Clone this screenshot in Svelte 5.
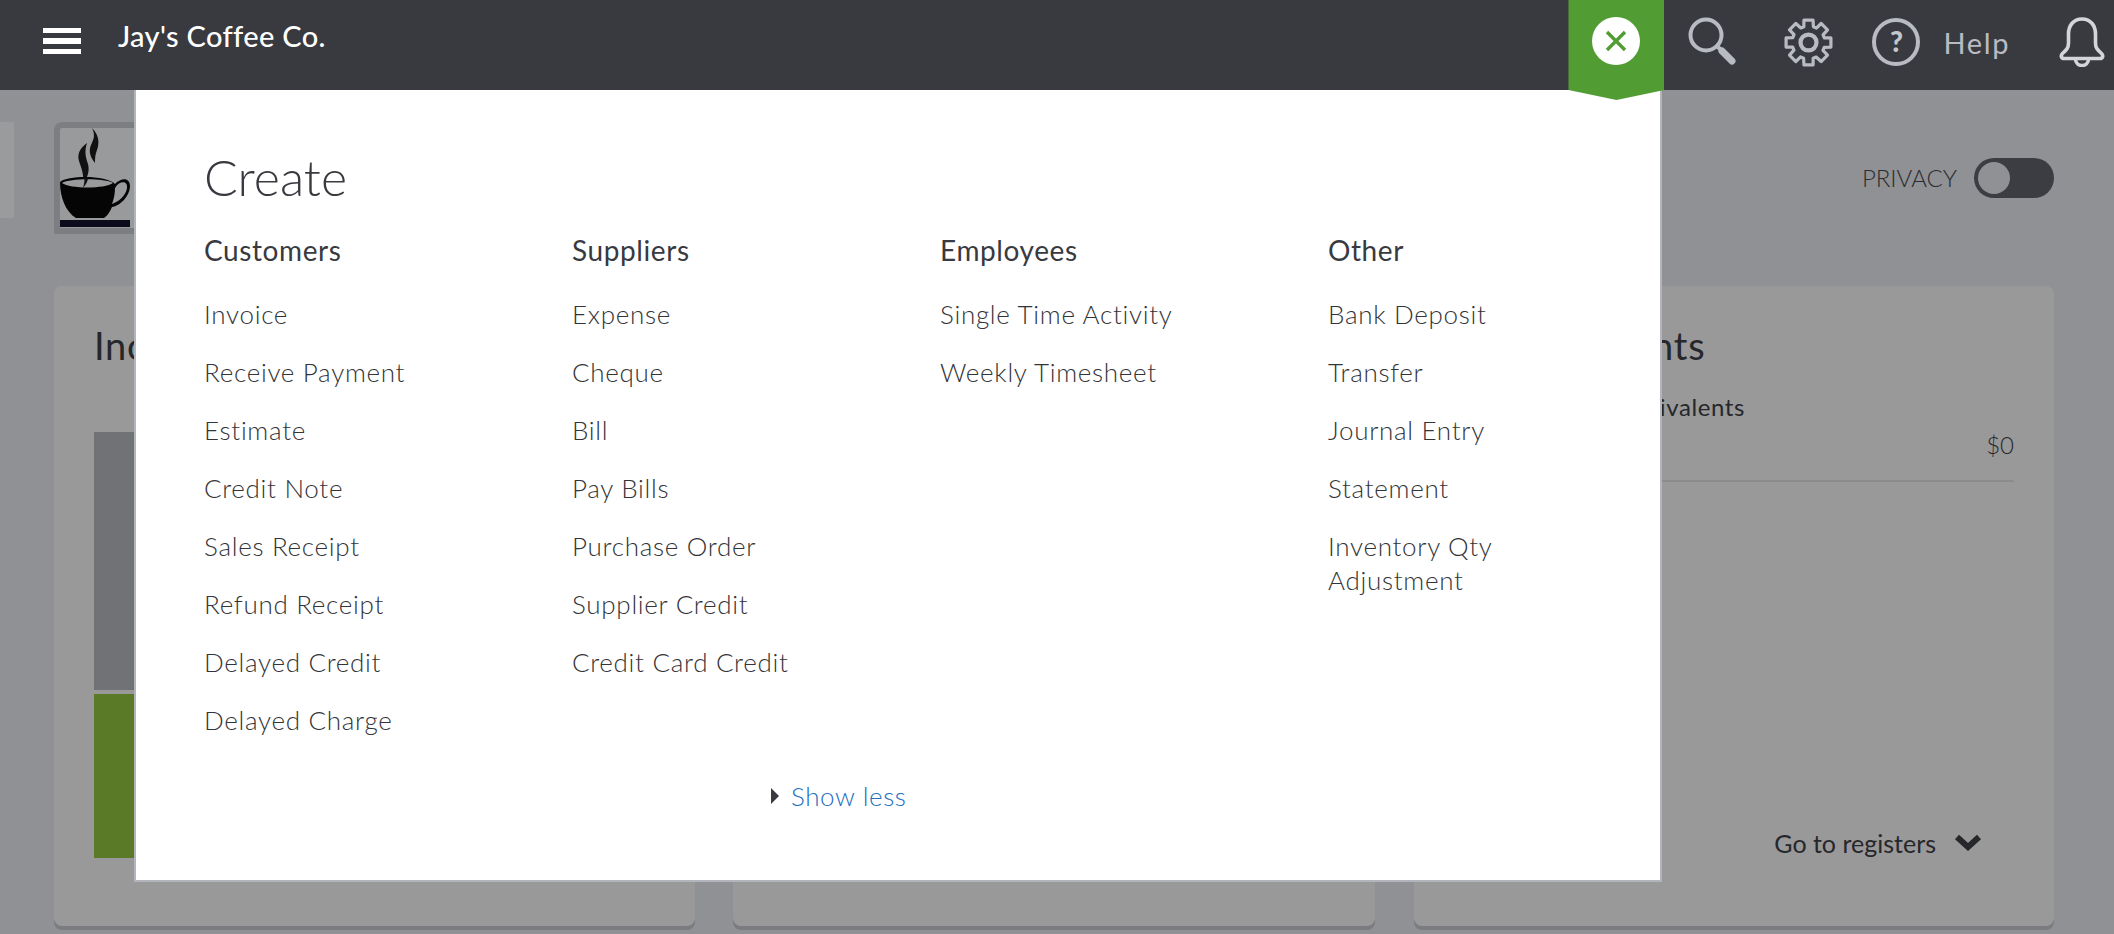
<script>
	const columns = [
		{ title: "Customers", width: 368, items: ["Invoice", "Receive Payment", "Estimate", "Credit Note", "Sales Receipt", "Refund Receipt", "Delayed Credit", "Delayed Charge"] },
		{ title: "Suppliers", width: 368, items: ["Expense", "Cheque", "Bill", "Pay Bills", "Purchase Order", "Supplier Credit", "Credit Card Credit"] },
		{ title: "Employees", width: 388, items: ["Single Time Activity", "Weekly Timesheet"] },
		{ title: "Other", width: 200, items: ["Bank Deposit", "Transfer", "Journal Entry", "Statement", "Inventory Qty Adjustment"] }
	];

	// 8 toothed gear outline, centred on 24,24
	function gearPath() {
		let d = "";
		for (let i = 0; i < 8; i++) {
			const a = (i * Math.PI) / 4 - Math.PI / 2;
			const pts = [[21.5, -0.2], [21.5, 0.2], [15.5, 0.3], [15.5, 0.5]].map(([r, o]) => [
				(24 + r * Math.cos(a + o)).toFixed(1),
				(24 + r * Math.sin(a + o)).toFixed(1)
			]);
			for (const p of pts) d += (d ? "L" : "M") + p[0] + " " + p[1];
		}
		return d + "Z";
	}
</script>

<div class="page">
	<header>
		<div class="burger"><span></span><span></span><span></span></div>
		<div class="company">Jay's Coffee Co.</div>

		<div class="tab">
			<button class="close" type="button" aria-label="Close">
				<svg width="24" height="24" viewBox="0 0 24 24"><path d="M3 3l18 18M21 3L3 21" stroke="#529c34" stroke-width="3.4" fill="none" /></svg>
			</button>
		</div>

		<div class="tools">
			<svg class="search" width="50" height="50" viewBox="0 0 50 50" fill="none" stroke="#b9bbc3">
				<circle cx="18" cy="18" r="15.500" stroke-width="4" />
				<path d="M30 30l4 4" stroke-width="4" />
				<path d="M34 34l10 10" stroke-width="7" stroke-linecap="round" />
			</svg>
			<svg class="gear" width="51" height="51" viewBox="0 0 48 48" fill="none" stroke="#b9bbc3" stroke-width="3" stroke-linejoin="round">
				<path d={gearPath()} />
				<circle cx="24" cy="24" r="7.500" stroke-width="4" />
			</svg>
			<div class="help-icon">?</div>
			<span class="help">Help</span>
			<svg class="bell" width="46" height="50" viewBox="0 0 46 50" fill="none" stroke="#d4d5da" stroke-width="3.6" stroke-linejoin="round">
				<path d="M23 2C14 2 9.500 9 9.500 17v9c0 5-2 7-6 10.500C1.500 38.500 2 41.500 5 41.500h36c3 0 3.500-3 1.500-5C38.500 33 36.500 31 36.500 26v-9C36.500 9 32 2 23 2Z" />
				<path d="M16.500 42c0 4 3 6.500 6.500 6.500s6.500-2.500 6.500-6.500" />
			</svg>
		</div>
	</header>

	<main>
		<div class="top-row">
			<div class="side-stub"></div>
			<div class="logo">
				<svg width="74" height="100" viewBox="0 0 74 100">
					<path d="M32 0C40 8 39 16 37 22C35 27 35 30 35 35C31 30 28 24 31 17C33 12 36 8 32 0Z" fill="#111" />
					<path d="M27 15C20 20 17 26 19 33C21 40 24 44 23 56C27 50 30 44 28 36C26 30 24 24 27 15Z" fill="#111" />
					<path d="M0 54C0 70 6 84 16 90H44C47 88 50 84 52 79C60 78 70 68 70 58C70 50 62 49 55 56C47 47 8 47 0 54Z" fill="#050505" />
					<path d="M55 60C60 52 68 53 67 60C66 68 58 74 52 76C54 71 55 65 55 60Z" fill="#999a9c" />
					<path d="M2 55C10 50 45 50 53 55C45 61 10 61 2 55Z" fill="#999a9c" />
					<path d="M24 50C25 53 24 56 23 60C26 56 28 53 28 50Z" fill="#111" />
					<rect x="0" y="92" width="70" height="7" fill="#0b0b1c" />
				</svg>
			</div>
			<div class="spacer"></div>
			<span class="privacy">PRIVACY</span>
			<div class="toggle"><span class="knob"></span></div>
		</div>

		<div class="cards">
			<section class="card income">
				<h2>Income</h2>
				<div class="bar grey"></div>
				<div class="bar green"></div>
			</section>
			<section class="card middle"></section>
			<section class="card bank">
				<h2>Bank accounts</h2>
				<div class="account">Cash and cash equivalents</div>
				<div class="amount">$0</div>
				<div class="registers">Go to registers
					<svg width="28" height="18" viewBox="0 0 28 18"><path d="M3 3l11 10L25 3" fill="none" stroke="#26272b" stroke-width="6" /></svg>
				</div>
			</section>
		</div>
	</main>

	<div class="modal">
		<h1>Create</h1>
		<div class="columns">
			{#each columns as col}
				<div class="column" style:width={col.width + "px"}>
					<h3>{col.title}</h3>
					<ul>
						{#each col.items as item}
							<li>{item}</li>
						{/each}
					</ul>
				</div>
			{/each}
		</div>
		<div class="more">
			<span class="caret"></span>
			<span class="link">Show less</span>
		</div>
	</div>
</div>

<style>
	:global(body) {
		background: #909194;
		font-family: Lato, "Open Sans", sans-serif;
	}

	.page {
		position: relative;
		height: 934px;
		overflow: hidden;
		background: #909194;
	}

	header {
		position: relative;
		z-index: 3;
		height: 90px;
		background: #393a3f;
		display: flex;
		align-items: center;
	}
	.burger {
		display: flex;
		flex-direction: column;
		gap: 5px;
		width: 38px;
		margin: -8px 0 0 43px;
	}
	.burger span {
		height: 5.5px;
		background: #fff;
	}
	.company {
		margin: -19px 0 0 37px;
		flex: 1;
		color: #fff;
		font-size: 29px;
		font-weight: 500;
		letter-spacing: 0.35px;
	}

	.tab {
		align-self: flex-start;
		width: 96px;
		height: 100px;
		background: #529c34;
		clip-path: polygon(0 0, 100% 0, 100% 90px, 50% 100px, 0 90px);
		display: flex;
		justify-content: center;
		padding-top: 17px;
		box-sizing: border-box;
	}
	.close {
		width: 48px;
		height: 48px;
		padding: 0;
		border: none;
		border-radius: 50%;
		background: #fff;
		display: flex;
		align-items: center;
		justify-content: center;
	}

	.tools {
		display: flex;
		align-items: center;
		margin: -6px 9px 0 24px;
	}
	.gear {
		margin-left: 45px;
	}
	.help-icon {
		box-sizing: border-box;
		width: 48px;
		height: 48px;
		margin-left: 38px;
		border: 4px solid #b9bbc3;
		border-radius: 50%;
		color: #c4c6cd;
		font-size: 28px;
		font-weight: 900;
		line-height: 39px;
		text-align: center;
	}
	.help {
		margin-left: 23px;
		color: #b9bbc3;
		font-size: 29px;
		letter-spacing: 1.6px;
	}
	.bell {
		margin-left: 49px;
	}

	.top-row {
		display: flex;
		align-items: flex-start;
		padding: 32px 60px 0 0;
		height: 196px;
		box-sizing: border-box;
	}
	.side-stub {
		width: 14px;
		height: 96px;
		background: #9a9b9d;
	}
	.logo {
		margin-left: 40px;
		padding: 6px 0 6px 6px;
		width: 80px;
		height: 100px;
		background: #999a9c;
		box-shadow: inset 0 0 0 6px #7d7e82;
		border-radius: 8px 0 0 0;
	}
	.spacer {
		flex: 1;
	}
	.privacy {
		margin-top: 41px;
		color: #2c2d31;
		font-size: 24px;
		font-weight: 300;
	}
	.toggle {
		box-sizing: border-box;
		width: 80px;
		height: 40px;
		margin: 36px 0 0 17px;
		padding: 4px;
		border-radius: 20px;
		background: #3c3d42;
	}
	.knob {
		display: block;
		width: 32px;
		height: 32px;
		border-radius: 50%;
		background: #909194;
	}

	.cards {
		display: grid;
		grid-template-columns: 641px 642px 641px;
		column-gap: 38px;
		margin-left: 54px;
		align-items: start;
	}
	.card {
		position: relative;
		box-sizing: border-box;
		height: 640px;
		background: #999;
		border-radius: 8px;
		box-shadow: 0 4px 0 #7b7c80;
		color: #26272b;
	}
	h2 {
		margin: 0;
		font-size: 38px;
		font-weight: 400;
		letter-spacing: 0.75px;
	}
	.income {
		padding: 36px 40px;
	}
	.bar {
		width: 300px;
	}
	.grey {
		height: 258px;
		margin-top: 64px;
		background: #717276;
	}
	.green {
		height: 164px;
		margin-top: 4px;
		background: #5a7a28;
	}
	.bank {
		margin-left: 1px;
		padding: 36px 40px;
	}
	.account {
		margin-top: 24px;
		font-size: 24px;
		letter-spacing: 0.6px;
	}
	.amount {
		margin-top: 9px;
		padding-bottom: 21px;
		border-bottom: 2px solid #8b8c8d;
		text-align: right;
		font-size: 24px;
		font-weight: 300;
	}
	.registers {
		position: absolute;
		right: 72px;
		top: 542px;
		display: flex;
		align-items: center;
		gap: 18px;
		font-size: 25px;
	}

	.modal {
		position: absolute;
		z-index: 2;
		top: 90px;
		left: 134px;
		box-sizing: border-box;
		width: 1528px;
		height: 792px;
		padding: 59px 0 0 68px;
		background: #fff;
		border: 2px solid #b2b5bc;
		border-top: none;
		color: #393a3f;
	}
	h1 {
		margin: 0;
		font-size: 50px;
		font-weight: 300;
		line-height: 56px;
	}
	.columns {
		display: flex;
		margin-top: 28px;
	}
	h3 {
		margin: 0;
		font-size: 28px;
		font-weight: 400;
		letter-spacing: 0.6px;
		line-height: 34px;
	}
	ul {
		margin: 30px 0 0;
		padding: 0;
		list-style: none;
	}
	li {
		color: #333438;
		font-size: 26px;
		font-weight: 300;
		letter-spacing: 0.7px;
		line-height: 34px;
		margin-bottom: 24px;
	}
	.more {
		position: absolute;
		left: 635px;
		top: 690px;
		display: flex;
		align-items: center;
		gap: 12px;
	}
	.caret {
		border-left: 8px solid #393a3f;
		border-top: 8px solid transparent;
		border-bottom: 8px solid transparent;
	}
	.link {
		color: #2470c0;
		font-size: 26px;
		font-weight: 300;
		letter-spacing: 0.6px;
	}
</style>
